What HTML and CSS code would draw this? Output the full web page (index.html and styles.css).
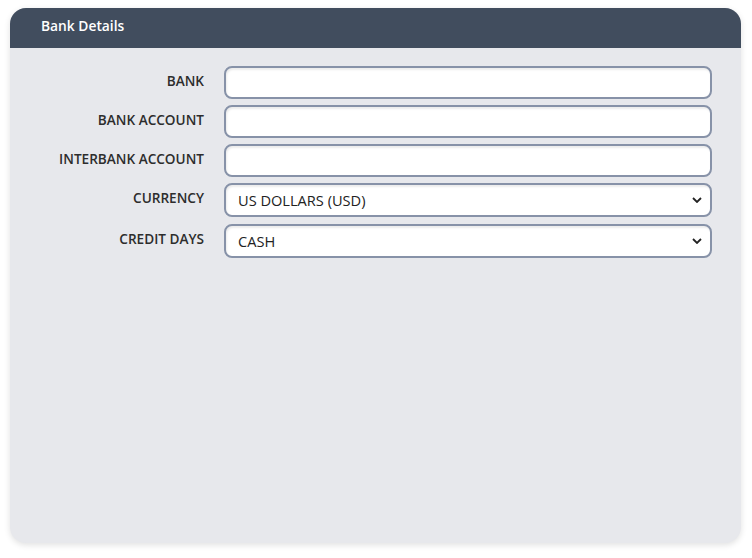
FILE: index.html
```html
<!DOCTYPE html>
<html>
<head>
<meta charset="utf-8">
<link rel="stylesheet" href="styles.css">
</head>
<body>
<div class="card">
  <div class="card-header">Bank Details</div>
  <div class="card-body">
    <div class="row">
      <label class="lbl">BANK</label>
      <input class="field" type="text">
    </div>
    <div class="row">
      <label class="lbl">BANK ACCOUNT</label>
      <input class="field" type="text">
    </div>
    <div class="row">
      <label class="lbl">INTERBANK ACCOUNT</label>
      <input class="field" type="text">
    </div>
    <div class="row">
      <label class="lbl">CURRENCY</label>
      <div class="select-wrap">
        <select class="field sel"><option>US DOLLARS (USD)</option></select>
        <svg class="chev" viewBox="0 0 10 6" width="10" height="6"><path d="M1 1 L5 5 L9 1" fill="none" stroke="#222" stroke-width="1.8"/></svg>
      </div>
    </div>
    <div class="row">
      <label class="lbl">CREDIT DAYS</label>
      <div class="select-wrap">
        <select class="field sel"><option>CASH</option></select>
        <svg class="chev" viewBox="0 0 10 6" width="10" height="6"><path d="M1 1 L5 5 L9 1" fill="none" stroke="#222" stroke-width="1.8"/></svg>
      </div>
    </div>
  </div>
</div>
</body>
</html>
```
FILE: styles.css
```css
html, body { margin: 0; padding: 0; background: #ffffff; }
body { padding: 8px 11px 15px 10px; font-family: "Open Sans", "Noto Sans", sans-serif; }
.card {
  width: 731px;
  height: 535px;
  border-radius: 16px;
  background: #e7e8ec;
  box-shadow: 0 2px 6px rgba(0,0,0,0.12);
  overflow: hidden;
  display: flex;
  flex-direction: column;
}
.card-header {
  height: 40px;
  background: #414d5e;
  color: #ffffff;
  font-weight: 600;
  font-size: 13.8px;
  line-height: 36px;
  padding-left: 31px;
  box-sizing: border-box;
}
.card-body {
  padding: 18px 29px 0 0;
  display: flex;
  flex-direction: column;
  gap: 6px;
}
.row {
  display: grid;
  grid-template-columns: 194px 488px;
  column-gap: 20px;
  align-items: start;
}
.row:nth-child(5) { margin-top: 1px; }
.lbl {
  text-align: right;
  font-size: 13.6px;
  font-weight: 600;
  color: #2d2d2d;
  padding-top: 5px;
  line-height: 19px;
}
.field {
  box-sizing: border-box;
  width: 488px;
  height: 33px;
  border: 2px solid #8792a8;
  border-radius: 8px;
  background: #ffffff;
  box-shadow: inset 1px 2px 2px rgba(0,0,0,0.08);
  margin: 0;
  font-family: "Open Sans", "Noto Sans", sans-serif;
  font-size: 14.6px;
  color: #222;
  padding: 0 12px;
  outline: none;
}
.select-wrap { position: relative; width: 488px; }
.sel {
  height: 34px;
  appearance: none;
  -webkit-appearance: none;
  padding: 0 12px;
}
.chev { position: absolute; right: 10px; top: 14px; pointer-events: none; }
```
